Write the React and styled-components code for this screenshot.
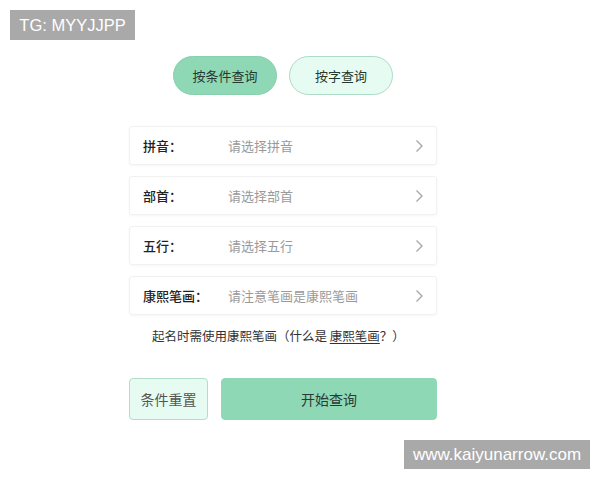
import React from "react";
import styled, { createGlobalStyle } from "styled-components";

const GlobalStyle = createGlobalStyle`
  body {
    margin: 0;
    background: #fff;
    font-family: "Noto Sans CJK SC", "Noto Sans", sans-serif;
  }
`;

const rows = [
  { label: "拼音：", hint: "请选择拼音" },
  { label: "部首：", hint: "请选择部首" },
  { label: "五行：", hint: "请选择五行" },
  { label: "康熙笔画：", hint: "请注意笔画是康熙笔画" },
];

const Chevron = () => (
  <svg width="9" height="14" viewBox="0 0 9 14">
    <path d="M1.5 1.5 L7 7 L1.5 12.5" fill="none" stroke="#a8a8a8" strokeWidth="1.4" />
  </svg>
);

const App = () => {
  return (
    <Page>
      <GlobalStyle />
      <Mark>TG: MYYJJPP</Mark>
      <Column>
        <Tabs>
          <Pill $active>按条件查询</Pill>
          <Pill>按字查询</Pill>
        </Tabs>
        <List>
          {rows.map((row) => (
            <Row key={row.label}>
              <Label>{row.label}</Label>
              <Hint>{row.hint}</Hint>
              <Chevron />
            </Row>
          ))}
        </List>
        <Note>
          起名时需使用康熙笔画（什么是 <u>康熙笔画</u>？）
        </Note>
        <Actions>
          <ResetButton>条件重置</ResetButton>
          <StartButton>开始查询</StartButton>
        </Actions>
      </Column>
      <Site>www.kaiyunarrow.com</Site>
    </Page>
  );
};

const Page = styled.div`
  position: relative;
  width: 600px;
  height: 480px;
  overflow: hidden;
`;

const Mark = styled.div`
  position: absolute;
  left: 10px;
  top: 10px;
  width: 125px;
  height: 30px;
  background: #a9a9a9;
  color: #fff;
  font-family: "Liberation Sans", Arial, sans-serif;
  font-size: 16.5px;
  line-height: 30px;
  text-align: center;
`;

const Site = styled(Mark)`
  left: 404px;
  top: 440px;
  width: 186px;
  height: 29px;
  line-height: 29px;
  font-size: 17px;
`;

const Column = styled.div`
  width: 308px;
  margin-left: 129px;
  padding-top: 56px;
`;

const Tabs = styled.div`
  display: flex;
  justify-content: center;
  gap: 12px;
`;

const Pill = styled.div`
  width: 104px;
  height: 39px;
  box-sizing: border-box;
  border-radius: 20px;
  display: flex;
  align-items: center;
  justify-content: center;
  font-size: 13px;
  color: #26392f;
  background: ${(p) => (p.$active ? "#8fd8b6" : "#e6fbf2")};
  border: 1px solid ${(p) => (p.$active ? "#88d0ad" : "#acdcc6")};
`;

const List = styled.div`
  margin-top: 31px;
  display: flex;
  flex-direction: column;
  gap: 11px;
`;

const Row = styled.div`
  height: 39px;
  box-sizing: border-box;
  display: flex;
  align-items: center;
  padding: 0 12px 0 13px;
  border: 1px solid #f1f1f1;
  border-radius: 3px;
  box-shadow: 0 1px 3px rgba(0, 0, 0, 0.04);
`;

const Label = styled.span`
  width: 85px;
  flex-shrink: 0;
  font-size: 13px;
  font-weight: 500;
  color: #222;
`;

const Hint = styled.span`
  flex: 1;
  font-size: 13px;
  color: #9a9a9a;
`;

const Note = styled.div`
  margin-top: 12px;
  padding-left: 23px;
  font-size: 12.5px;
  color: #333;
  line-height: 18px;

  u {
    text-underline-offset: 2px;
  }
`;

const Actions = styled.div`
  margin-top: 33px;
  display: flex;
  gap: 13px;
`;

const ResetButton = styled.div`
  width: 79px;
  height: 42px;
  box-sizing: border-box;
  border-radius: 4px;
  background: #e6fbf2;
  border: 1px solid #b3dccb;
  display: flex;
  align-items: center;
  justify-content: center;
  font-size: 14px;
  color: #555;
`;

const StartButton = styled(ResetButton)`
  width: 216px;
  background: #8fd8b6;
  border-color: #8fd8b6;
  color: #2b3a33;
`;

export default App;
